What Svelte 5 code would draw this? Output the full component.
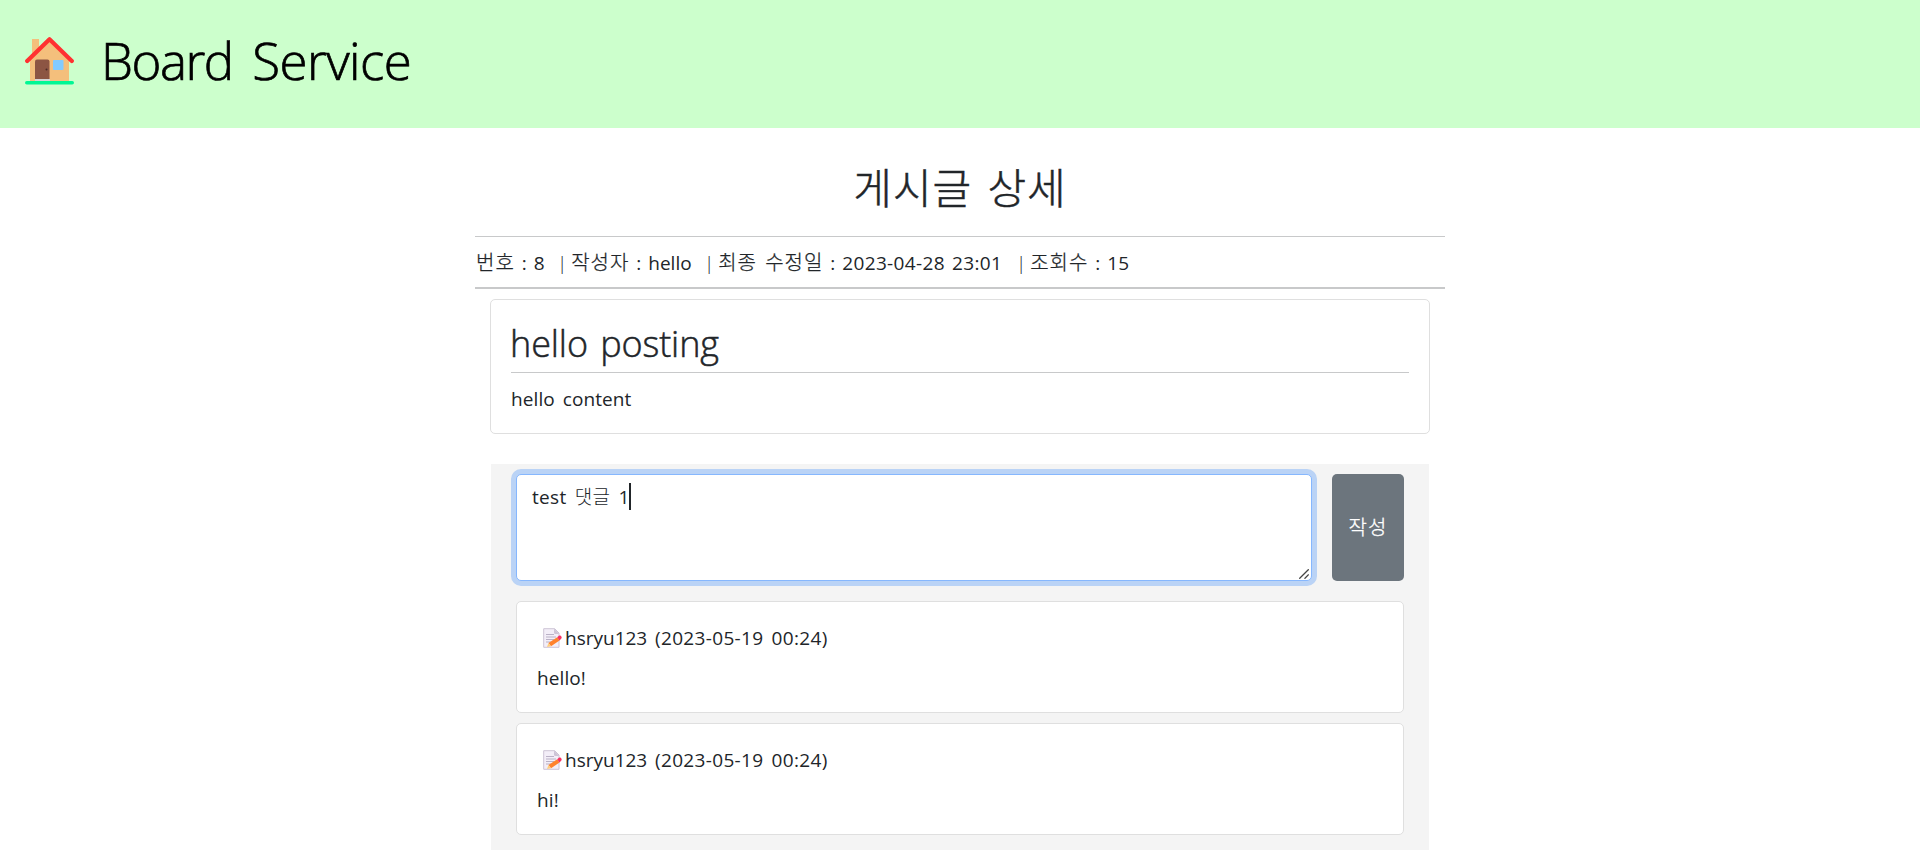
<script>
	const post = {
		id: 8,
		writer: 'hello',
		updated: '2023-04-28 23:01',
		views: 15,
		title: 'hello posting',
		content: 'hello content'
	};

	let comments = [
		{ writer: 'hsryu123', date: '2023-05-19 00:24', content: 'hello!' },
		{ writer: 'hsryu123', date: '2023-05-19 00:24', content: 'hi!' }
	];

	let draft = 'test 댓글 1';

	const addComment = () => {
		if (!draft) return;
		comments = [...comments, { writer: post.writer, date: post.updated, content: draft }];
		draft = '';
	};
</script>

<header>
	<svg class="house" viewBox="0 0 49 49">
		<path fill="#f4bf7c" d="M7 2h7v10L24.500 3 44 23v21H5V23l2-2z" />
		<rect x="10" y="22.500" width="14.500" height="21" rx="2" fill="#8c5543" />
		<path fill="#d3d3d3" d="M10 42h15v2H10z" />
		<circle cx="21.500" cy="32.500" r="1" fill="#4a2b28" />
		<rect x="28" y="23" width="10.500" height="10" rx="1" fill="#83cbff" />
		<path fill="none" stroke="#ff3131" stroke-width="4.200" stroke-linecap="round" stroke-linejoin="round" d="M2.200 24 24.500 2.300 46.800 24" />
		<rect y="44" width="49" height="3.500" rx="1.750" fill="#00f794" />
	</svg>
	<h1>Board <span>Service</span></h1>
</header>

<main>
	<h2>게시글 상세</h2>
	<div class="info">
		<span class="id"><b>번호</b> : {post.id}</span>
		<span class="writer"><s>|</s> <b>작성자</b> : {post.writer}</span>
		<span class="date"><s>|</s> <b>최종 수정일</b> : <i>{post.updated}</i></span>
		<span><s>|</s> <b>조회수</b> : {post.views}</span>
	</div>

	<article>
		<h3>{post.title}</h3>
		<p>{post.content}</p>
	</article>

	<section>
		<form on:submit|preventDefault={addComment}>
			<div class="field">
				<textarea bind:value={draft} spellcheck="false"></textarea>
				<span class="caret"></span>
				<svg class="grip" viewBox="0 0 10 10">
					<path d="M.300 9.700 9.700.300M5.500 9.700 9.700 5.500" />
				</svg>
			</div>
			<button>작성</button>
		</form>
		{#each comments as comment}
			<div class="comment">
				<div class="meta">
					<svg class="memo" viewBox="0 0 20 20">
						<path fill="#f3eef8" stroke="#cdc4d6" d="M.7.700h11L16 5v14.300H.700z" />
						<path fill="#cdc4d6" d="M11 .500 16.300 6H12.500Q11 6 11 4.500z" />
						<path fill="none" stroke="#b3a9c0" stroke-width=".9" d="M3 6.500h8M3 9h10M3 11.500h8M3 14h5" />
						<path fill="#ff822d" d="m5.500 15 8.700-5.800 2.300 3.300L8 18.300z" />
						<path fill="#ffce7c" d="m5.500 15 2.500 3.300-4 .8z" />
						<path fill="#f92f60" d="m14.200 9.200 1.700-1.500c1.500-1.200 3.600 1.400 2.400 2.800l-1.800 2z" />
					</svg>
					<span>{comment.writer} <i>({comment.date})</i></span>
				</div>
				<p>{comment.content}</p>
			</div>
		{/each}
	</section>
</main>

<style>
	:global(body) {
		background: #fff;
		color: #212529;
		font: 400 19px/30px 'Open Sans', 'Noto Sans CJK KR', sans-serif;
		word-spacing: 2.8px;
		overflow: hidden;
	}

	h1,
	h2,
	h3,
	p {
		margin: 0;
	}

	p {
		letter-spacing: 0.1px;
	}

	i {
		font-style: normal;
		letter-spacing: 0.34px;
	}

	header {
		display: flex;
		align-items: center;
		box-sizing: border-box;
		height: 128px;
		padding: 0 25px 9px;
		background: #ccffcc;
	}
	.house {
		width: 49px;
		height: 49px;
		margin-top: 3px;
	}
	h1 {
		margin-left: 27px;
		color: #000;
		font-size: 51px;
		font-weight: 300;
		line-height: 60px;
		letter-spacing: -1.5px;
		word-spacing: 8px;
		-webkit-text-stroke: 0.7px #000;
	}
	h1 span {
		letter-spacing: -0.6px;
	}

	main {
		width: 970px;
		margin: 0 auto;
	}
	h2 {
		padding: 33px 0 25px;
		text-align: center;
		font: 300 42px/50px 'Noto Sans CJK KR', sans-serif;
		letter-spacing: 1px;
		word-spacing: 5px;
		-webkit-text-stroke: 0.5px #212529;
	}

	.info {
		display: flex;
		box-sizing: border-box;
		height: 53px;
		padding: 11px 0 0 1px;
		border-top: 1px solid #c8c9ca;
		border-bottom: 2px solid #c8c9ca;
		white-space: nowrap;
		word-spacing: 2px;
	}
	.info b {
		font-size: 20px;
		font-weight: 300;
		letter-spacing: 1px;
		-webkit-text-stroke: 0.25px #212529;
	}
	.info s {
		margin-right: -3px;
		font-weight: 300;
		text-decoration: none;
	}
	.id {
		width: 81px;
	}
	.writer {
		width: 147px;
	}
	.date {
		width: 312px;
	}

	article {
		box-sizing: border-box;
		width: 940px;
		height: 135px;
		margin: 10px auto 30px;
		padding: 20px;
		border: 1px solid #dfdfdf;
		border-radius: 5px;
	}
	h3 {
		margin-bottom: 11px;
		padding: 2px 0 6px;
		border-bottom: 1px solid #c8c9ca;
		font-size: 36px;
		font-weight: 300;
		line-height: 44px;
		text-indent: -1px;
		letter-spacing: -0.1px;
		word-spacing: 3px;
		-webkit-text-stroke: 0.5px #212529;
	}

	section {
		box-sizing: border-box;
		width: 938px;
		height: 386px;
		margin: 0 auto;
		padding: 10px 25px 0;
		background: #f4f4f4;
	}
	form {
		display: flex;
		gap: 20px;
		margin-bottom: 20px;
	}
	.field {
		position: relative;
		flex: 1;
	}
	textarea {
		display: block;
		box-sizing: border-box;
		width: 100%;
		height: 107px;
		padding: 7px 15px;
		border: 1px solid #86b7fe;
		border-radius: 5px;
		outline: none;
		box-shadow: 0 0 0 5px rgba(13, 110, 253, 0.25);
		color: inherit;
		font: 400 19px/30px 'Open Sans', 'Noto Sans CJK KR Light', 'Noto Sans CJK KR', sans-serif;
		letter-spacing: 0.3px;
		word-spacing: 3px;
		resize: none;
	}
	.caret {
		position: absolute;
		top: 9px;
		left: 113px;
		width: 2px;
		height: 27px;
		background: #212529;
	}
	.grip {
		position: absolute;
		right: 3px;
		bottom: 2px;
		width: 10px;
		height: 10px;
		fill: none;
		stroke: #444;
		stroke-width: 1.3;
	}
	button {
		width: 72px;
		height: 107px;
		padding: 0 0 2px;
		border: none;
		border-radius: 5px;
		background: #6c757d;
		color: #fff;
		font: 300 20px/30px 'Noto Sans CJK KR', sans-serif;
		letter-spacing: 1px;
		-webkit-text-stroke: 0.3px #fff;
	}

	.comment {
		box-sizing: border-box;
		height: 112px;
		margin-bottom: 10px;
		padding: 21px 20px 0;
		border: 1px solid #dfdfdf;
		border-radius: 5px;
		background: #fff;
	}
	.meta {
		display: flex;
		align-items: center;
		height: 30px;
		margin-bottom: 10px;
	}
	.memo {
		width: 20px;
		height: 20px;
		margin: 0 2px 0 6px;
	}
</style>
